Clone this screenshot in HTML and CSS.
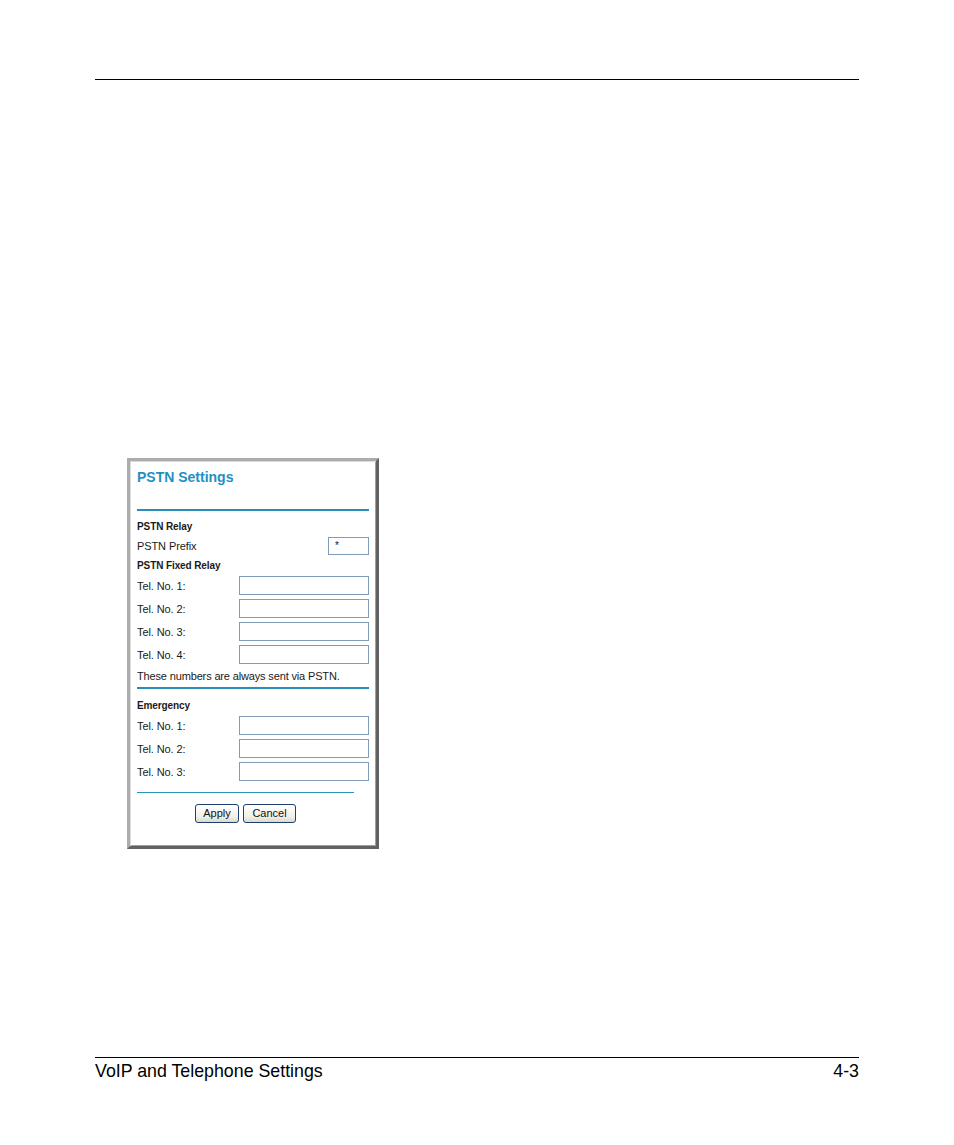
FILE: index.html
```html
<!DOCTYPE html>
<html lang="en">
<head>
<meta charset="utf-8">
<title>PSTN Settings</title>
<link rel="stylesheet" href="styles.css">
</head>
<body>
<div class="page">
  <div class="header"></div>
  <div class="figure">
    <div class="panel">
      <div class="title">PSTN Settings</div>
      <div class="rule"></div>
      <div class="head head-first">PSTN Relay</div>
      <div class="row">
        <span class="label">PSTN Prefix</span>
        <span class="input input-small">*</span>
      </div>
      <div class="head head-fixed">PSTN Fixed Relay</div>
      <div class="row"><span class="label">Tel. No. 1:</span><span class="input"></span></div>
      <div class="row"><span class="label">Tel. No. 2:</span><span class="input"></span></div>
      <div class="row"><span class="label">Tel. No. 3:</span><span class="input"></span></div>
      <div class="row"><span class="label">Tel. No. 4:</span><span class="input"></span></div>
      <div class="note">These numbers are always sent via PSTN.</div>
      <div class="rule rule-tight"></div>
      <div class="head head-emergency">Emergency</div>
      <div class="row"><span class="label">Tel. No. 1:</span><span class="input"></span></div>
      <div class="row"><span class="label">Tel. No. 2:</span><span class="input"></span></div>
      <div class="row"><span class="label">Tel. No. 3:</span><span class="input"></span></div>
      <div class="bottom">
        <div class="thin-rule"></div>
        <div class="buttons">
          <span class="btn btn-apply">Apply</span>
          <span class="btn btn-cancel">Cancel</span>
        </div>
      </div>
    </div>
  </div>
  <div class="footer">
    <span>VoIP and Telephone Settings</span>
    <span>4-3</span>
  </div>
</div>
</body>
</html>
```

FILE: styles.css
```css
html, body {
  margin: 0;
  padding: 0;
  background: #ffffff;
}

.page {
  width: 764px;
  margin-left: 95px;
  font-family: "Liberation Sans", Arial, sans-serif;
  color: #000;
}

.header {
  height: 79px;
  border-bottom: 1px solid #000;
}

.figure {
  margin-top: 378px;
  margin-left: 32px;
  width: 252px;
  box-sizing: border-box;
  border-style: solid;
  border-width: 3px;
  border-color: #acacac #626262 #626262 #acacac;
  box-shadow: inset 1px 1px 0 #dadada, inset -1px -1px 0 #a0a0a0;
  background: #fff;
}

.panel {
  padding: 8px 7px 23px 7px;
  font-size: 11px;
  color: #1a1a1a;
}

.title {
  font-size: 14px;
  font-weight: bold;
  line-height: 17px;
  height: 17px;
  color: #1f90c3;
}

.rule {
  margin-top: 23px;
  height: 2px;
  width: 232px;
  background: #2a8db5;
}

.rule-tight {
  margin-top: 1px;
}

.head {
  font-size: 10px;
  font-weight: bold;
  line-height: 16px;
  height: 16px;
  letter-spacing: -0.1px;
}

.head-first {
  margin-top: 8px;
  height: 15px;
  line-height: 15px;
}

.head-fixed {
  height: 17px;
  line-height: 17px;
}

.head-emergency {
  margin-top: 9px;
}

.row {
  display: flex;
  align-items: center;
  justify-content: space-between;
  width: 232px;
  height: 23px;
}

.label {
  font-size: 11px;
  letter-spacing: -0.1px;
}

.input {
  display: block;
  box-sizing: border-box;
  width: 130px;
  height: 19px;
  border: 1px solid #7f9db9;
  background: #fff;
}

.input-small {
  width: 41px;
  height: 18px;
  font-size: 10px;
  line-height: 16px;
  padding-left: 6px;
}

.note {
  font-size: 11px;
  letter-spacing: -0.15px;
  line-height: 20px;
  height: 20px;
}

.bottom {
  width: 217px;
}

.thin-rule {
  margin-top: 9px;
  height: 1px;
  background: #2a95c0;
}

.buttons {
  margin-top: 11px;
  display: flex;
  justify-content: center;
  gap: 4px;
}

.btn {
  display: block;
  box-sizing: border-box;
  height: 19px;
  border: 1px solid #1f3f6e;
  border-radius: 3px;
  background: linear-gradient(#ffffff, #f0efe8 70%, #dcd9cc);
  font-size: 11px;
  line-height: 17px;
  text-align: center;
  color: #111;
}

.btn-apply {
  width: 44px;
}

.btn-cancel {
  width: 53px;
}

.footer {
  margin-top: 208px;
  border-top: 1px solid #000;
  padding-top: 3px;
  display: flex;
  justify-content: space-between;
  font-size: 17.8px;
  line-height: 21px;
}
```
